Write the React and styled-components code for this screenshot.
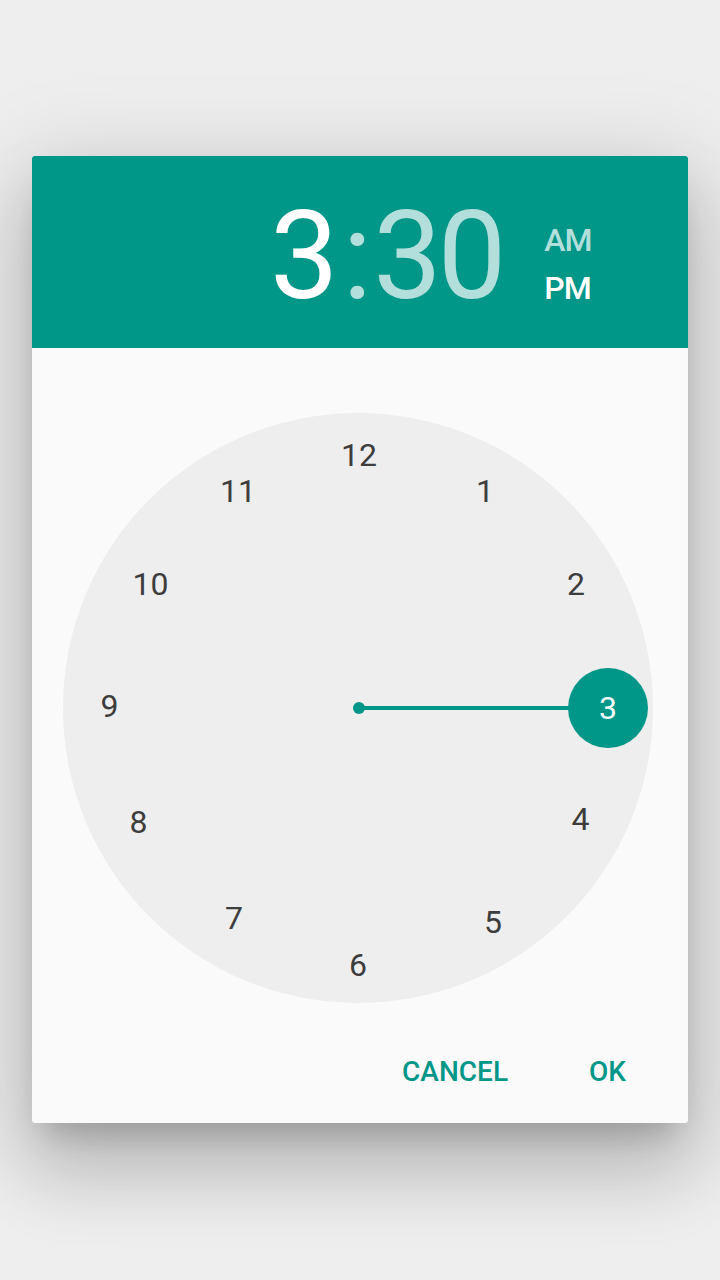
import React from 'react';
import styled, { createGlobalStyle } from 'styled-components';

const GlobalStyle = createGlobalStyle`
  html, body {
    margin: 0;
    padding: 0;
    background: #eeeeee;
    font-family: Roboto, 'Liberation Sans', sans-serif;
  }
`;

const Page = styled.div`
  width: 720px;
  height: 1280px;
  padding-top: 156px;
  box-sizing: border-box;
  background: #eeeeee;
`;

const Dialog = styled.div`
  width: 656px;
  margin-left: 32px;
  background: #fafafa;
  border-radius: 3px;
  overflow: hidden;
  box-shadow: 0 48px 76px 6px rgba(0, 0, 0, 0.14), 0 18px 92px 16px rgba(0, 0, 0, 0.12),
    0 22px 30px -14px rgba(0, 0, 0, 0.2);
`;

const Header = styled.div`
  height: 192px;
  box-sizing: border-box;
  padding: 40px 0 0 238px;
  background: #009688;
  display: flex;
  align-items: flex-start;
`;

const Big = styled.span`
  font-size: 122px;
  line-height: 122px;
  font-weight: 400;
  color: ${(props) => (props.$active ? '#ffffff' : '#b2dfdb')};
`;

const Hours = styled(Big)`
  margin-right: 4px;
`;

const Colon = styled(Big)`
  margin-right: 1px;
`;

const Minutes = styled(Big)`
  letter-spacing: -4px;
`;

const AmPm = styled.div`
  display: flex;
  flex-direction: column;
  margin: 20px 0 0 42px;
`;

const Meridiem = styled.span`
  font-size: 32px;
  line-height: 48px;
  font-weight: 500;
  letter-spacing: -1px;
  color: ${(props) => (props.$active ? '#ffffff' : '#b2dfdb')};
`;

const ClockArea = styled.div`
  padding: 65px 0 0 31px;
`;

const Face = styled.div`
  position: relative;
  width: 590px;
  height: 590px;
  border-radius: 50%;
  background: #eeeeee;
`;

const Hand = styled.div`
  position: absolute;
  left: 296px;
  top: 293px;
  width: 250px;
  height: 4px;
  background: #009688;
`;

const Pivot = styled.div`
  position: absolute;
  left: 290px;
  top: 289px;
  width: 12px;
  height: 12px;
  border-radius: 50%;
  background: #009688;
`;

const Selector = styled.div`
  position: absolute;
  left: ${(props) => props.$x}px;
  top: ${(props) => props.$y}px;
  width: 80px;
  height: 80px;
  margin: -40px 0 0 -40px;
  border-radius: 50%;
  background: #009688;
`;

const Number = styled.span`
  position: absolute;
  left: ${(props) => props.$x}px;
  top: ${(props) => props.$y}px;
  transform: translate(-50%, -50%);
  font-size: 32px;
  line-height: 32px;
  color: ${(props) => (props.$selected ? '#ffffff' : '#3d3d3d')};
  white-space: nowrap;
`;

const Footer = styled.div`
  display: flex;
  justify-content: flex-end;
  gap: 81px;
  padding: 55px 62px 37px 0;
`;

const Action = styled.span`
  font-size: 28px;
  line-height: 28px;
  font-weight: 500;
  color: #009688;
`;

const numbers = [
  { n: 12, x: 296, y: 42 },
  { n: 1, x: 422, y: 78 },
  { n: 2, x: 513, y: 171 },
  { n: 3, x: 545, y: 295 },
  { n: 4, x: 517.5, y: 406 },
  { n: 5, x: 430, y: 509 },
  { n: 6, x: 295, y: 551.5 },
  { n: 7, x: 171, y: 504.5 },
  { n: 8, x: 75.5, y: 409 },
  { n: 9, x: 46.5, y: 293 },
  { n: 10, x: 87.5, y: 171 },
  { n: 11, x: 175, y: 78 },
];

const App = () => {
  const selected = 3;
  const sel = numbers.find((item) => item.n === selected);

  return (
    <Page>
      <GlobalStyle />
      <Dialog>
        <Header>
          <Hours $active>3</Hours>
          <Colon>:</Colon>
          <Minutes>30</Minutes>
          <AmPm>
            <Meridiem>AM</Meridiem>
            <Meridiem $active>PM</Meridiem>
          </AmPm>
        </Header>
        <ClockArea>
          <Face>
            <Hand />
            <Pivot />
            <Selector $x={sel.x} $y={sel.y} />
            {numbers.map((item) => (
              <Number key={item.n} $x={item.x} $y={item.y} $selected={item.n === selected}>
                {item.n}
              </Number>
            ))}
          </Face>
        </ClockArea>
        <Footer>
          <Action>CANCEL</Action>
          <Action>OK</Action>
        </Footer>
      </Dialog>
    </Page>
  );
};

export default App;
